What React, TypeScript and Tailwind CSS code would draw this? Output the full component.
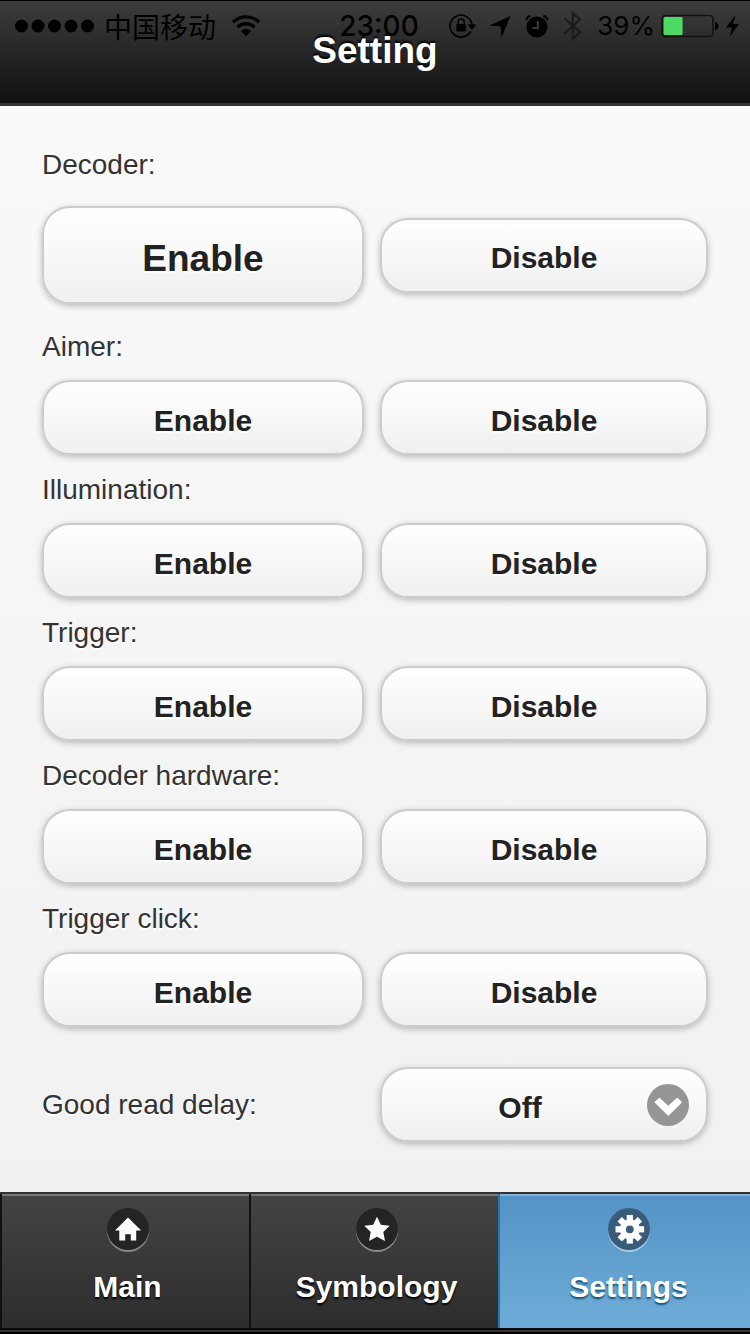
import React from "react";

const sections = ["Aimer", "Illumination", "Trigger", "Decoder hardware", "Trigger click"];

function PillButton({ children, large = false }: { children: string; large?: boolean }) {
  return (
    <button
      type="button"
      className={
        (large ? "h-[98px] text-[37px]" : "h-[75px] text-[30px]") +
        " w-full cursor-pointer rounded-[28px] border-2 border-[#ccc] bg-linear-to-b from-white to-[#f0f0f0] bg-clip-padding pt-1.5 font-bold leading-none text-[#222] shadow-[0_2px_6px_rgba(0,0,0,0.25)] [text-shadow:0_2px_0_#fff]"
      }
    >
      {children}
    </button>
  );
}

function ToggleRow({ label, large = false }: { label: string; large?: boolean }) {
  return (
    <section role="group" aria-label={label}>
      <p className="text-[28px] leading-8">{label}:</p>
      <div
        className={
          (large ? "mt-[25px] mb-[27px]" : "mt-[17px] mb-[19px]") +
          " grid grid-cols-[322fr_328fr] items-center gap-4"
        }
      >
        <PillButton large={large}>Enable</PillButton>
        <PillButton>Disable</PillButton>
      </div>
    </section>
  );
}

function StatusBar() {
  return (
    <div className="absolute inset-x-0 top-[3px] grid h-11 grid-cols-[1fr_auto_1fr] items-center pl-[15px] pr-[7px] font-['Inter','Noto_Sans_CJK_SC',sans-serif] text-black">
      <div className="flex items-center">
        <svg width="79" height="14" viewBox="0 0 79 14" aria-hidden="true">
          <circle cx="6.5" cy="7" r="6.5" />
          <circle cx="23" cy="7" r="6.5" />
          <circle cx="39.5" cy="7" r="6.5" />
          <circle cx="56" cy="7" r="6.5" />
          <circle cx="72.5" cy="7" r="6.5" />
        </svg>
        <span className="ml-2.5 font-['Noto_Sans_CJK_SC',sans-serif] text-[28px] leading-7 font-normal whitespace-nowrap">
          中国移动
        </span>
        <svg className="ml-4" width="28" height="22" viewBox="0 0 28 22" aria-hidden="true">
          <g fill="none" stroke="#000" strokeWidth="3.4">
            <path d="M1 7.2 A18.5 18.5 0 0 1 27 7.2" />
            <path d="M5.4 12.2 A12.3 12.3 0 0 1 22.6 12.2" />
          </g>
          <path d="M9 16 A7 7 0 0 1 19 16 L14 21.4 Z" />
        </svg>
      </div>
      <span className="text-[28px] leading-8 font-medium">23:00</span>
      <div className="flex items-center justify-end">
        <svg width="28" height="26" viewBox="0 0 28 26" aria-hidden="true">
          <path d="M21.6 18.5 A11 11 0 1 1 23 12.5" fill="none" stroke="#000" strokeWidth="1.6" />
          <path d="M18.6 11.5 H27.4 L23 17 Z" />
          <rect x="7.4" y="11" width="9.4" height="7.4" rx="0.8" />
          <path d="M9.2 11.5 V9 a3 3 0 0 1 6 0 V11.5" fill="none" stroke="#000" strokeWidth="1.6" />
        </svg>
        <svg className="ml-3" width="22" height="23" viewBox="0 0 22 23" aria-hidden="true">
          <path d="M21.5 1 L12.5 22.5 L11.5 11.6 L0.5 10.4 Z" />
        </svg>
        <svg className="ml-3.5" width="24" height="24" viewBox="0 0 24 24" aria-hidden="true">
          <circle cx="12" cy="13" r="10.5" />
          <path d="M12.8 6.8 V14 H7.5" fill="none" stroke="#3a3a3a" strokeWidth="2" />
          <path
            d="M1.4 6 A5 5 0 0 1 5.6 2 M22.6 6 A5 5 0 0 0 18.4 2"
            fill="none"
            stroke="#000"
            strokeWidth="2"
          />
        </svg>
        <svg className="ml-3.5" width="20" height="32" viewBox="0 0 20 32" aria-hidden="true">
          <path
            d="M1.5 8.5 L17 22 L9.7 29 V3 L17 9.5 L1.5 23.5"
            fill="none"
            stroke="#1c1c1c"
            strokeWidth="2.2"
          />
        </svg>
        <span className="ml-3.5 text-[26px] leading-8">39%</span>
        <svg className="ml-1.5" width="58" height="24" viewBox="0 0 58 24" aria-hidden="true">
          <rect x="1" y="1.5" width="51" height="21" rx="3.5" fill="none" stroke="#111" strokeWidth="1.6" />
          <rect x="2.6" y="3" width="19" height="18" rx="1.5" fill="#4cd964" />
          <path d="M54 8 Q57.5 9 57.5 12 Q57.5 15 54 16 Z" />
        </svg>
        <svg className="ml-1.5" width="18" height="24" viewBox="0 0 18 24" aria-hidden="true">
          <path d="M10.5 1 L1 13.5 H7 L4.5 23 L14 10 H8 Z" />
        </svg>
      </div>
    </div>
  );
}

function HomeIcon() {
  return <path d="M21 9.5 L34.2 22.5 H29.2 V32.5 H23.8 V26.2 H18.2 V32.5 H12.3 V22.5 H8 Z" />;
}

function StarIcon() {
  return <path d="M21 8.7 L24.9 16.7 L33.7 17.8 L27.3 24 L29 33 L21 28.7 L13.1 33 L14.7 24 L8.3 17.8 L17.2 16.7 Z" />;
}

function GearIcon() {
  return (
    <>
      <circle cx="21.8" cy="21.3" r="7" fill="none" stroke="#fff" strokeWidth="6.2" />
      {[0, 45, 90, 135, 180, 225, 270, 315].map((angle) => (
        <rect key={angle} x="18.7" y="7" width="6.2" height="6" transform={`rotate(${angle} 21.8 21.3)`} />
      ))}
    </>
  );
}

function Tab({ label, active = false, children }: { label: string; active?: boolean; children: React.ReactNode }) {
  return (
    <a
      href={"#" + label.toLowerCase()}
      aria-current={active ? "page" : undefined}
      className={
        (active
          ? "border-l-[#2a75a8] from-[#5393c5] to-[#6facd8] pl-[7px] shadow-[inset_0_2px_0_#86b3d7] [text-shadow:0_2px_2px_#145072]"
          : "border-l-[#111] from-[#444] to-[#2d2d2d] pl-1 shadow-[inset_0_2px_0_#777] [text-shadow:0_2px_2px_#000]") +
        " flex flex-col items-center border-l-2 bg-linear-to-b pt-3.5 pb-[22px] font-bold text-white"
      }
    >
      <span
        className={
          (active
            ? "bg-[#385c7a] shadow-[0_2px_0_rgba(255,255,255,0.45)]"
            : "bg-[#242424] shadow-[0_2px_0_rgba(255,255,255,0.4)]") + " size-[42px] rounded-full"
        }
      >
        <svg width="42" height="42" viewBox="0 0 42 42" fill="#fff" aria-hidden="true">
          {children}
        </svg>
      </span>
      <span className="mt-[18px] text-[30px] leading-[38px]">{label}</span>
    </a>
  );
}

export default function App() {
  return (
    <div className="flex min-h-screen flex-col bg-[#f0f0f0] font-['Liberation_Sans',Arial,sans-serif]">
      <header className="relative border-t border-b-[3px] border-t-black border-b-[#333] bg-linear-to-b from-[#3d3d3d] to-[#111] pt-7 pb-[30px]">
        <StatusBar />
        <h1 className="relative text-center text-[37px] leading-[44px] font-bold text-white [text-shadow:0_-2px_2px_#000]">
          Setting
        </h1>
      </header>

      <main className="flex-1 bg-linear-to-b from-[#f9f9f9] to-[#f1f1f1] px-[42px] pt-[43px] pb-[50px] text-[#333] [text-shadow:0_2px_0_#fff]">
        <ToggleRow label="Decoder" large />
        {sections.map((label) => (
          <ToggleRow key={label} label={label} />
        ))}
        <div className="grid grid-cols-[322fr_328fr] items-center gap-4 pt-[21px]">
          <label htmlFor="delay" className="text-[28px] leading-8">
            Good read delay:
          </label>
          <div className="relative">
            <select
              id="delay"
              defaultValue="Off"
              className="block h-[75px] w-full cursor-pointer appearance-none rounded-[28px] border-2 border-[#ccc] bg-linear-to-b from-white to-[#f0f0f0] bg-clip-padding pt-1.5 pr-12 text-center text-[30px] leading-9 font-bold text-[#222] shadow-[0_2px_6px_rgba(0,0,0,0.25)] [text-align-last:center] [text-shadow:0_2px_0_#fff]"
            >
              <option>Off</option>
            </select>
            <svg
              className="pointer-events-none absolute inset-y-0 right-[19px] my-auto"
              width="42"
              height="42"
              viewBox="0 0 42 42"
              aria-hidden="true"
            >
              <circle cx="21" cy="21" r="21" fill="#959595" />
              <path
                d="M12.4 14.4 L21.3 22.8 L30.2 14.4 L34.2 18.2 L21.3 31 L8.4 18.2 Z"
                fill="#fff"
                stroke="#fff"
                strokeWidth="1.4"
                strokeLinejoin="round"
              />
            </svg>
          </div>
        </div>
      </main>

      <footer className="border-y-2 border-t-[#333] border-b-black bg-[#333] pb-0.5">
        <nav className="grid grid-cols-[249fr_249fr_252fr] border-b-2 border-[#0c0c0c]">
          <Tab label="Main">
            <HomeIcon />
          </Tab>
          <Tab label="Symbology">
            <StarIcon />
          </Tab>
          <Tab label="Settings" active>
            <GearIcon />
          </Tab>
        </nav>
      </footer>
    </div>
  );
}
